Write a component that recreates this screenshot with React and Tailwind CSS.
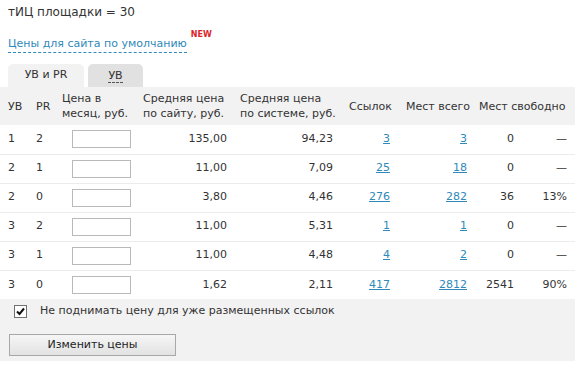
const rows = [
  { uv: 1, pr: 2, site: "135,00", sys: "94,23", links: "3", total: "3", free: "0", pct: "—" },
  { uv: 2, pr: 1, site: "11,00", sys: "7,09", links: "25", total: "18", free: "0", pct: "—" },
  { uv: 2, pr: 0, site: "3,80", sys: "4,46", links: "276", total: "282", free: "36", pct: "13%" },
  { uv: 3, pr: 2, site: "11,00", sys: "5,31", links: "1", total: "1", free: "0", pct: "—" },
  { uv: 3, pr: 1, site: "11,00", sys: "4,48", links: "4", total: "2", free: "0", pct: "—" },
  { uv: 3, pr: 0, site: "1,62", sys: "2,11", links: "417", total: "2812", free: "2541", pct: "90%" },
]

function Link({ children }) {
  return <a href="#" className="text-[#3089b9] underline decoration-[#3089b9]">{children}</a>
}

export default function App() {
  return (
    <div className="w-[575px] h-[373px] bg-white text-[#333] text-[11px] font-['DejaVu_Sans',Verdana,sans-serif] overflow-hidden">
      {/* Title + default prices link */}
      <div className="pl-2 pt-[4px] h-[20px] text-[12px] leading-[16px]">тИЦ площадки = 30</div>
      <div className="pl-2 mt-[16px] h-[20px] flex items-start">
        <a href="#" className="text-[11px] leading-[16px] text-[#3089b9] border-b border-dashed border-[#3089b9]">
          Цены для сайта по умолчанию
        </a>
        <span className="ml-[4px] -mt-[5px] text-[8px] font-bold text-[#d9262b] leading-none">NEW</span>
      </div>

      {/* Tabs */}
      <div className="mt-[8px] pl-2 flex gap-[4px] h-[23px]">
        <div className="w-[76px] rounded-t-[5px] bg-[#f2f2f2] flex items-center justify-center text-[11px]">УВ и PR</div>
        <div className="w-[55px] rounded-t-[5px] bg-[#e1e1e1] flex items-center justify-center text-[11px]">
          <span className="border-b border-dashed border-[#555] leading-[13px]">УВ</span>
        </div>
      </div>

      {/* Table */}
      <table className="w-[575px] table-fixed border-collapse">
        <colgroup>
          <col className="w-[28px]" />
          <col className="w-[26px]" />
          <col className="w-[81px]" />
          <col className="w-[100px]" />
          <col className="w-[106px]" />
          <col className="w-[57px]" />
          <col className="w-[77px]" />
          <col className="w-[47px]" />
          <col className="w-[53px]" />
        </colgroup>
        <thead>
          <tr className="h-[38px] bg-[#f2f2f2] text-left align-middle leading-[15px]">
            <th className="font-normal pl-2">УВ</th>
            <th className="font-normal pl-2">PR</th>
            <th className="font-normal pl-2">Цена в<br />месяц, руб.</th>
            <th className="font-normal pl-2">Средняя цена<br />по сайту, руб.</th>
            <th className="font-normal pl-[5px]">Средняя цена<br />по системе, руб.</th>
            <th className="font-normal pl-[8px]">Ссылок</th>
            <th className="font-normal pl-2">Мест всего</th>
            <th colSpan={2} className="font-normal pl-1 whitespace-nowrap">Мест свободно</th>
          </tr>
        </thead>
        <tbody>
          {rows.map((r, i) => (
            <tr key={i} className="h-[29px] border-b border-[#ececec] last:border-b-0">
              <td className="pl-2">{r.uv}</td>
              <td className="pl-2">{r.pr}</td>
              <td className="pl-[18px]">
                <div className="w-[59px] h-[18px] border border-[#b9b9b9] bg-white" />
              </td>
              <td className="text-right pr-2">{r.site}</td>
              <td className="text-right pr-2">{r.sys}</td>
              <td className="text-right pr-2"><Link>{r.links}</Link></td>
              <td className="text-right pr-2"><Link>{r.total}</Link></td>
              <td className="text-right pr-2">{r.free}</td>
              <td className="text-right pr-2">{r.pct}</td>
            </tr>
          ))}
        </tbody>
      </table>

      {/* Footer */}
      <div className="bg-[#f2f2f2] h-[62px] pt-[5px]">
        <label className="flex items-center h-[14px] pl-[14px] gap-[13px] text-[11px]">
          <span className="w-[13px] h-[13px] bg-white border border-[#707070] flex items-center justify-center">
            <svg width="9" height="9" viewBox="0 0 9 9">
              <path d="M1 4.5 L3.5 7 L8 1.5" fill="none" stroke="#111" strokeWidth="2" />
            </svg>
          </span>
          Не поднимать цену для уже размещенных ссылок
        </label>
        <button className="mt-[16px] ml-[9px] w-[167px] h-[22px] border border-[#a8a8a8] bg-gradient-to-b from-[#f6f6f6] to-[#e2e2e2] text-[11px] text-[#222]">
          Изменить цены
        </button>
      </div>
    </div>
  )
}
